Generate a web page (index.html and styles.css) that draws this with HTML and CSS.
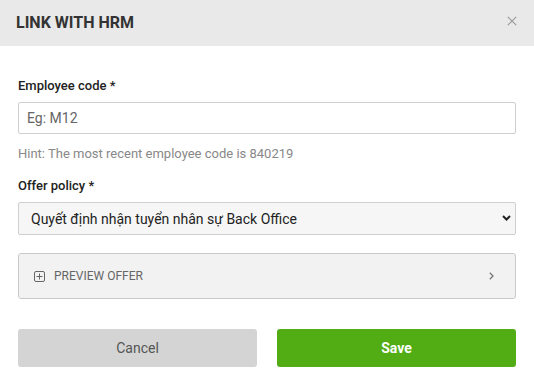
FILE: index.html
```html
<!DOCTYPE html>
<html lang="en">
<head>
<meta charset="utf-8">
<title>Link with HRM</title>
<link rel="stylesheet" href="styles.css">
</head>
<body>
<div class="modal">
  <header class="modal-header">
    <h1 class="modal-title">LINK WITH HRM</h1>
    <button class="close-btn" type="button" aria-label="Close">
      <svg width="10" height="10" viewBox="0 0 10 10"><path d="M0.8 0.8 L9.2 9.2 M9.2 0.8 L0.8 9.2" stroke="#9a9a9a" stroke-width="1.2" fill="none"/></svg>
    </button>
  </header>
  <form class="modal-body">
    <div class="field">
      <label class="field-label" for="code">Employee code *</label>
      <input class="text-input" id="code" type="text" placeholder="Eg: M12">
      <div class="hint">Hint: The most recent employee code is 840219</div>
    </div>
    <div class="field">
      <label class="field-label" for="policy">Offer policy *</label>
      <div class="select-wrap">
        <select class="select-input" id="policy">
          <option>Quyết định nhận tuyển nhân sự Back Office</option>
        </select>
        <svg class="select-arrow" width="9" height="6" viewBox="0 0 9 6"><path d="M1 1 L4.5 4.5 L8 1" stroke="#222" stroke-width="2" fill="none"/></svg>
      </div>
    </div>
    <div class="preview">
      <div class="preview-left">
        <svg width="11" height="11" viewBox="0 0 11 11"><rect x="0.5" y="0.5" width="10" height="10" rx="1.5" stroke="#666" fill="none"/><path d="M5.5 2.5 V8.5 M2.5 5.5 H8.5" stroke="#666" stroke-width="1" fill="none"/></svg>
        <span class="preview-text">PREVIEW OFFER</span>
      </div>
      <svg width="5" height="8" viewBox="0 0 5 8"><path d="M0.8 0.8 L4 4 L0.8 7.2" stroke="#777" stroke-width="1.3" fill="none"/></svg>
    </div>
    <div class="actions">
      <button type="button" class="btn btn-cancel">Cancel</button>
      <button type="button" class="btn btn-save">Save</button>
    </div>
  </form>
</div>
</body>
</html>
```

FILE: styles.css
```css
* { box-sizing: border-box; }
html, body { margin: 0; padding: 0; background: #fff; }
body { font-family: Roboto, "Liberation Sans", Arial, sans-serif; color: #222; }

.modal { width: 534px; }

.modal-header {
  height: 46px;
  background: #e9e9e9;
  display: flex;
  align-items: center;
  justify-content: space-between;
  padding: 0 16px 0 16px;
}
.modal-title {
  margin: 0;
  font-size: 16px;
  font-weight: 700;
  color: #333;
  line-height: 20px;
}
.close-btn {
  border: 0;
  background: transparent;
  padding: 0;
  width: 10px;
  height: 10px;
  display: flex;
  margin-top: -5px;
  margin-right: 1px;
}

.modal-body {
  padding: 32px 18px 0 18px;
  display: flex;
  flex-direction: column;
}

.field { display: flex; flex-direction: column; }
.field + .field { margin-top: 16px; }

.field-label {
  font-size: 13px;
  font-weight: 500;
  line-height: 16px;
  color: #222;
  margin-bottom: 8px;
}
.text-input {
  height: 32px;
  border: 1px solid #cfcfcf;
  border-radius: 2px;
  padding: 0 8px;
  font-family: inherit;
  font-size: 14px;
  color: #222;
  background: #fff;
  outline: none;
}
.text-input::placeholder { color: #666; }

.hint {
  margin-top: 12px;
  font-size: 13px;
  line-height: 16px;
  color: #888;
}

.select-wrap { position: relative; }
.select-input {
  width: 100%;
  height: 33px;
  appearance: none;
  -webkit-appearance: none;
  border: 1px solid #cfcfcf;
  border-radius: 2px;
  background: #f6f6f6;
  padding: 0 30px 0 12px;
  font-family: inherit;
  font-size: 14px;
  color: #222;
  outline: none;
}
.select-arrow {
  position: absolute;
  right: 5px;
  top: 13px;
  pointer-events: none;
}

.preview {
  margin-top: 18px;
  height: 46px;
  border: 1px solid #c9c9c9;
  border-radius: 3px;
  background: #f2f2f2;
  display: flex;
  align-items: center;
  justify-content: space-between;
  padding: 0 21px 0 15px;
}
.preview-left { display: flex; align-items: center; gap: 9px; }
.preview-left svg { display: block; }
.preview-text {
  font-size: 12px;
  color: #666;
  line-height: 14px;
}

.actions {
  margin-top: 30px;
  display: grid;
  grid-template-columns: 1fr 1fr;
  gap: 20px;
}
.btn {
  height: 38px;
  border: 0;
  border-radius: 3px;
  font-family: inherit;
  font-size: 14px;
}
.btn-cancel { background: #d4d4d4; color: #555; }
.btn-save { background: #52ad14; color: #fff; font-weight: 700; }
```
